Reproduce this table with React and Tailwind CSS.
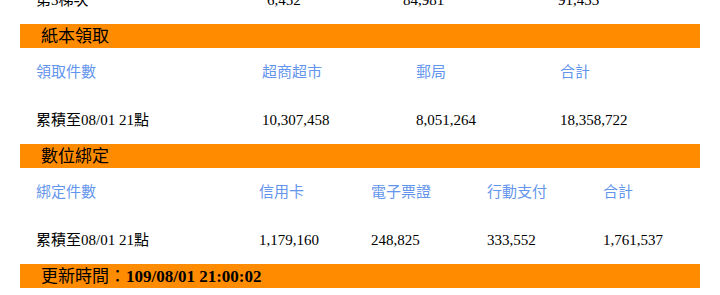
import React from 'react';

const font = { fontFamily: '"Liberation Serif", "Noto Sans CJK TC", serif' };

const Bar = ({ children }) => (
  <div className="mx-5 h-6 bg-[#ff8c00] pl-[21px] flex items-center text-[17px] text-black leading-none">
    {children}
  </div>
);

const Row = ({ cols, cells, head }) => (
  <div className={`mx-5 h-12 pl-4 grid items-center text-[15px] ${cols} ${head ? 'text-[#6495ed]' : 'text-black'}`}>
    {cells.map((c, i) => (
      <div key={i}>{c}</div>
    ))}
  </div>
);

export default function App() {
  const paperCols = 'grid-cols-[226px_154px_144px_1fr]';
  const digitalCols = 'grid-cols-[223px_112px_116px_116px_1fr]';

  return (
    <div className="h-[295px] overflow-hidden bg-white" style={font}>
      <div className="-mt-6">
        {/* 上一區塊的最後一列（被捲出畫面） */}
        <Row cols="grid-cols-[231px_136px_155px_1fr]" cells={['第3梯次', '6,452', '84,981', '91,433']} />

        <Bar>紙本領取</Bar>
        <Row cols={paperCols} head cells={['領取件數', '超商超市', '郵局', '合計']} />
        <Row cols={paperCols} cells={['累積至08/01 21點', '10,307,458', '8,051,264', '18,358,722']} />

        <Bar>數位綁定</Bar>
        <Row cols={digitalCols} head cells={['綁定件數', '信用卡', '電子票證', '行動支付', '合計']} />
        <Row cols={digitalCols} cells={['累積至08/01 21點', '1,179,160', '248,825', '333,552', '1,761,537']} />

        <Bar>
          更新時間：<b className="font-bold">109/08/01 21:00:02</b>
        </Bar>
      </div>
    </div>
  );
}
